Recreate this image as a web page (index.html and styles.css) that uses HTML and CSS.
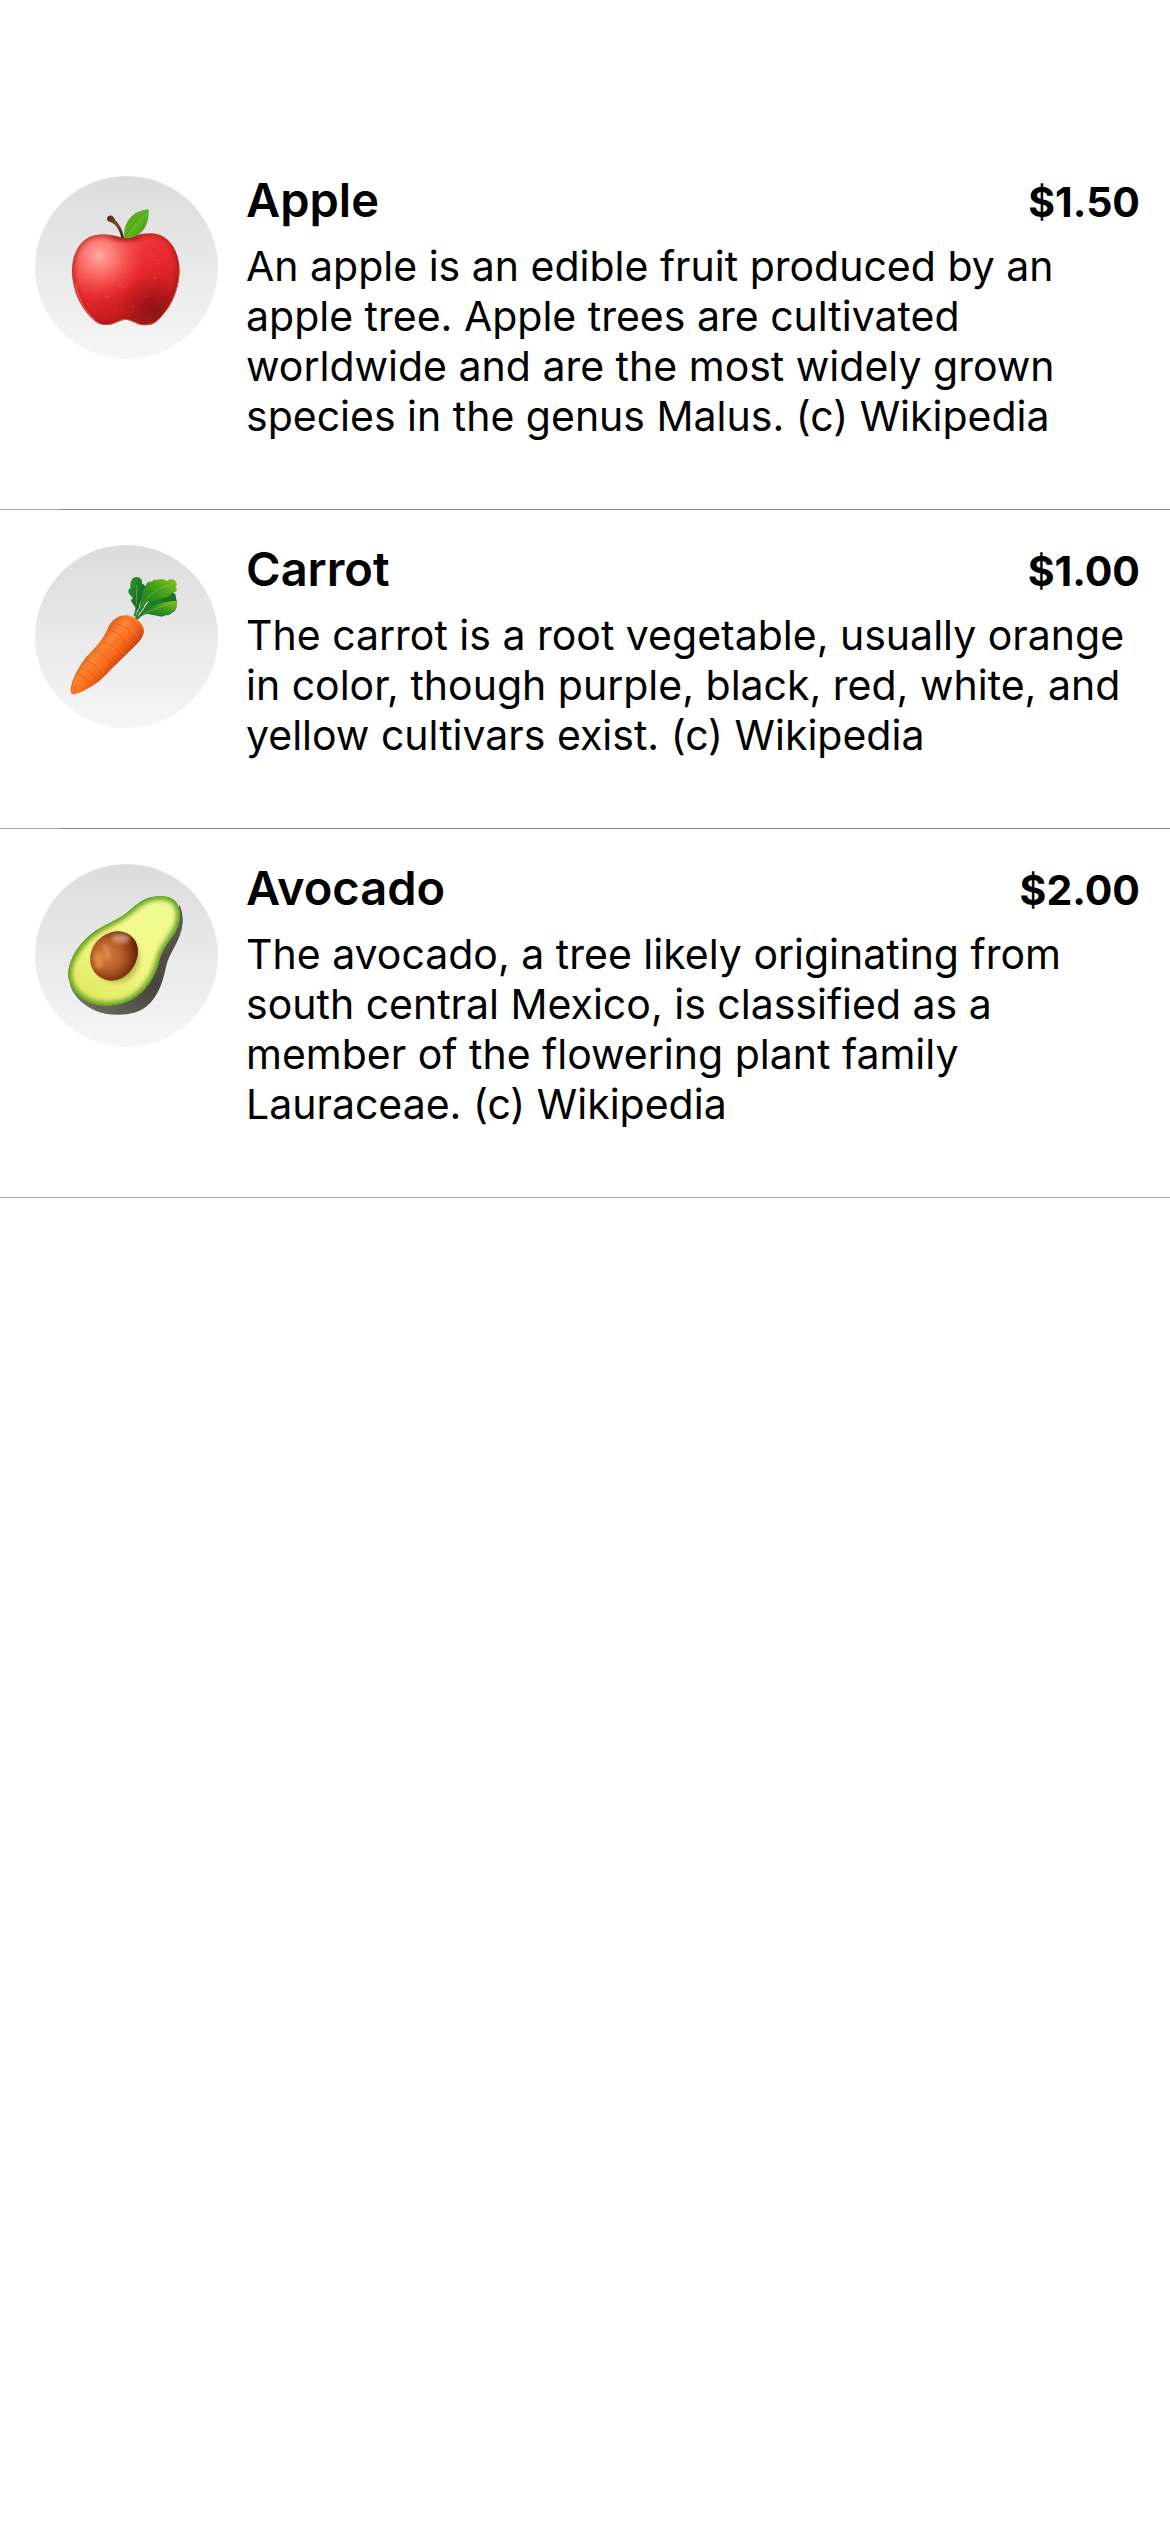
FILE: index.html
```html
<!DOCTYPE html>
<html lang="en">
<head>
<meta charset="utf-8">
<meta name="viewport" content="width=device-width, initial-scale=1">
<title>Products</title>
<link rel="stylesheet" href="styles.css">
</head>
<body>
<main class="screen">
  <ul class="product-list">
    <li class="product">
      <div class="avatar">
        <svg viewBox="45 47 549 549" role="img" aria-label="Apple">
          <defs>
            <linearGradient id="appleBase" x1="0.2" y1="0" x2="0.75" y2="1">
              <stop offset="0" stop-color="#f5484a"/><stop offset="0.5" stop-color="#e7282c"/><stop offset="0.8" stop-color="#c41c1f"/><stop offset="1" stop-color="#a8211f"/>
            </linearGradient>
            <radialGradient id="appleShine" gradientUnits="userSpaceOnUse" cx="238" cy="285" r="140">
              <stop offset="0" stop-color="#ffada3"/><stop offset="0.35" stop-color="#ff7f78" stop-opacity="0.85"/><stop offset="1" stop-color="#fb4a4b" stop-opacity="0"/>
            </radialGradient>
            <radialGradient id="appleShade" gradientUnits="userSpaceOnUse" cx="395" cy="445" r="100">
              <stop offset="0" stop-color="#6f0c10" stop-opacity="0.6"/><stop offset="1" stop-color="#8a0f12" stop-opacity="0"/>
            </radialGradient>
            <linearGradient id="appleLeaf" x1="0" y1="0" x2="1" y2="1">
              <stop offset="0" stop-color="#3f9a12"/><stop offset="0.5" stop-color="#62b822"/><stop offset="1" stop-color="#2f8a0c"/>
            </linearGradient>
            <linearGradient id="appleStem" x1="0" y1="0" x2="1" y2="1">
              <stop offset="0" stop-color="#4a2618"/><stop offset="0.5" stop-color="#7a4a34"/><stop offset="1" stop-color="#34150c"/>
            </linearGradient>
            <filter id="appleSoft" x="-20%" y="-20%" width="140%" height="140%"><feGaussianBlur stdDeviation="6"/></filter>
            <clipPath id="appleClip"><path d="M311 233C292 229 270 221 235 223C187 227 157 271 156 331C157 394 184 447 224 482C238 495 262 497 280 490C294 485 303 478 317 478C331 478 340 485 352 490C370 497 395 497 409 484C449 450 477 395 479 333C478 268 445 221 393 219C359 219 344 229 327 233Z"/></clipPath>
          </defs>
          <path d="M311 233C292 229 270 221 235 223C187 227 157 271 156 331C157 394 184 447 224 482C238 495 262 497 280 490C294 485 303 478 317 478C331 478 340 485 352 490C370 497 395 497 409 484C449 450 477 395 479 333C478 268 445 221 393 219C359 219 344 229 327 233Z" fill="url(#appleBase)"/>
          <g clip-path="url(#appleClip)">
            <rect x="150" y="210" width="340" height="300" fill="url(#appleShine)"/>
            <rect x="150" y="210" width="340" height="300" fill="url(#appleShade)"/>
            <ellipse cx="317" cy="232" rx="48" ry="10" fill="#a51418" opacity="0.6" filter="url(#appleSoft)"/>
            <path d="M311 233C292 229 270 221 235 223C187 227 157 271 156 331C157 394 184 447 224 482C238 495 262 497 280 490C294 485 303 478 317 478C331 478 340 485 352 490C370 497 395 497 409 484C449 450 477 395 479 333C478 268 445 221 393 219C359 219 344 229 327 233Z" fill="none" stroke="#8f1a18" stroke-width="14" opacity="0.6" filter="url(#appleSoft)"/>
            <path d="M165 370C175 417 198 457 226 482C240 495 262 496 280 490C294 485 303 478 317 478C331 478 340 485 352 490C370 497 395 497 409 484C449 450 477 395 479 333" fill="none" stroke="#f0694f" stroke-width="5" opacity="0.7"/>
            <g fill="#ff8d84" opacity="0.35"><circle cx="315" cy="335" r="3"/><circle cx="276" cy="355" r="3"/><circle cx="300" cy="374" r="3"/><circle cx="311" cy="380" r="2"/><circle cx="228" cy="386" r="2"/><circle cx="262" cy="408" r="3"/><circle cx="290" cy="268" r="3"/><circle cx="392" cy="280" r="2"/><circle cx="403" cy="298" r="2"/><circle cx="416" cy="310" r="2"/><circle cx="404" cy="352" r="3"/><circle cx="396" cy="370" r="2"/><circle cx="374" cy="249" r="2"/><circle cx="418" cy="264" r="2"/><circle cx="208" cy="335" r="2"/><circle cx="200" cy="350" r="2"/><circle cx="286" cy="438" r="2"/><circle cx="340" cy="440" r="2"/><circle cx="379" cy="408" r="2"/></g>
          </g>
          <path d="M304 233C300 212 288 191 271 185C260 184 259 172 265 167C274 162 283 169 286 180C299 192 309 211 312 234Z" fill="url(#appleStem)"/>
          <path d="M312 233C309 190 334 151 386 147C388 187 372 230 320 234Z" fill="url(#appleLeaf)"/>
          <path d="M316 230C328 203 350 175 383 150" fill="none" stroke="#2f860d" stroke-width="3" opacity="0.7"/>
        </svg>
      </div>
      <div class="details">
        <div class="heading"><h2 class="name">Apple</h2><span class="price">$1.50</span></div>
        <p class="description">An apple is an edible fruit produced by an apple tree. Apple trees are cultivated worldwide and are the most widely grown species in the genus Malus. (c) Wikipedia</p>
      </div>
    </li>
    <li class="product">
      <div class="avatar">
        <svg viewBox="45 44 549 549" role="img" aria-label="Carrot">
          <defs>
            <linearGradient id="carrotBody" gradientUnits="userSpaceOnUse" x1="220" y1="340" x2="295" y2="405">
              <stop offset="0" stop-color="#e2601c"/><stop offset="0.3" stop-color="#fb8433"/><stop offset="0.65" stop-color="#fb6b1b"/><stop offset="1" stop-color="#c94410"/>
            </linearGradient>
            <linearGradient id="leafBright" x1="0" y1="1" x2="1" y2="0">
              <stop offset="0" stop-color="#14702a"/><stop offset="0.5" stop-color="#36961c"/><stop offset="1" stop-color="#84c616"/>
            </linearGradient>
            <linearGradient id="leafDark" x1="0" y1="0" x2="1" y2="1">
              <stop offset="0" stop-color="#2b9a2c"/><stop offset="1" stop-color="#0d5423"/>
            </linearGradient>
            <clipPath id="carrotClip"><path d="M152 476C157 446 174 411 203 376C226 350 243 335 260 301C271 273 290 254 322 255C342 257 366 275 371 296C375 315 360 333 341 351L272 418C253 439 238 453 220 465C199 478 180 489 162 492C154 492 150 485 152 476Z"/></clipPath>
          </defs>
          <path d="M347 268C357 236 374 211 398 193M352 267C368 240 388 221 424 208M343 258C352 240 351 218 352 190" fill="none" stroke="#2f7b36" stroke-width="6"/>
          <path d="M350 240C350 230 337 223 332 208C340 207 340 204 331 195C323 186 323 177 332 172C329 157 335 140 349 140C360 139 368 149 366 160C375 162 379 171 375 183C371 198 360 207 355 238Z" fill="url(#leafDark)"/>
          <path d="M364 249C376 228 387 205 407 198C427 184 451 180 466 191L470 212C469 221 472 231 464 242C453 248 449 257 436 254C425 264 410 254 399 254C387 251 375 245 357 264Z" fill="url(#leafDark)"/>
          <path d="M358 235C362 215 363 193 371 180C377 164 381 150 395 154C403 145 413 150 423 147C430 142 434 153 442 151C455 142 469 149 471 162L466 171C477 179 467 188 455 188C445 203 428 201 416 207C400 215 382 205 374 225C370 235 363 245 355 251Z" fill="url(#leafBright)"/>
          <path d="M370 250C392 228 427 211 470 212C466 221 476 228 464 241C451 246 449 257 437 252C425 262 411 251 399 253C389 249 379 246 370 250Z" fill="url(#leafBright)"/>
          <path d="M360 235C373 205 402 178 449 162M370 251C397 239 426 225 461 218M349 224L350 165" fill="none" stroke="#a1cb46" stroke-width="2" opacity="0.7"/>
          <path d="M152 476C157 446 174 411 203 376C226 350 243 335 260 301C271 273 290 254 322 255C342 257 366 275 371 296C375 315 360 333 341 351L272 418C253 439 238 453 220 465C199 478 180 489 162 492C154 492 150 485 152 476Z" fill="url(#carrotBody)"/>
          <g clip-path="url(#carrotClip)" fill="none">
            <path d="M320 262C340 270 356 286 362 306M284 278C315 286 333 300 349 322M269 299C292 305 308 321 316 342M248 334C275 340 296 355 306 376M222 363C249 368 272 388 280 411M198 389C222 399 238 412 248 432M184 415C208 422 225 435 233 451M171 432C190 438 206 450 213 466" stroke="#c94611" stroke-width="3" opacity="0.45"/>
            <path d="M285 274C316 282 335 297 351 318M248 330C276 336 298 351 309 372M199 385C224 395 240 408 251 428" stroke="#ffb072" stroke-width="3" opacity="0.4"/>
            <path d="M152 476C157 446 174 411 203 376" stroke="#b94910" stroke-width="5" opacity="0.6"/>
          </g>
        </svg>
      </div>
      <div class="details">
        <div class="heading"><h2 class="name">Carrot</h2><span class="price">$1.00</span></div>
        <p class="description">The carrot is a root vegetable, usually orange in color, though purple, black, red, white, and yellow cultivars exist. (c) Wikipedia</p>
      </div>
    </li>
    <li class="product">
      <div class="avatar">
        <svg viewBox="45 41 549 549" role="img" aria-label="Avocado">
          <defs>
            <linearGradient id="avoSkin" x1="0.2" y1="1" x2="1" y2="0.2">
              <stop offset="0" stop-color="#6c6a63"/><stop offset="0.5" stop-color="#49453e"/><stop offset="1" stop-color="#5c574e"/>
            </linearGradient>
            <linearGradient id="avoFlesh" x1="0.8" y1="0" x2="0.2" y2="1">
              <stop offset="0" stop-color="#edfb92"/><stop offset="0.5" stop-color="#f5f789"/><stop offset="1" stop-color="#dfe860"/>
            </linearGradient>
            <radialGradient id="avoPit" gradientUnits="userSpaceOnUse" cx="262" cy="315" r="95">
              <stop offset="0" stop-color="#d5803a"/><stop offset="0.45" stop-color="#b7612a"/><stop offset="0.8" stop-color="#85350f"/><stop offset="1" stop-color="#571d08"/>
            </radialGradient>
            <filter id="avoSoft" x="-20%" y="-20%" width="140%" height="140%"><feGaussianBlur stdDeviation="7"/></filter>
            <clipPath id="avoClip"><path d="M144 370C148 320 181 273 229 240C262 219 291 210 320 187C347 166 372 137 420 138C456 137 479 153 480 193C480 218 471 240 454 263C436 289 424 306 416 337C405 381 380 415 350 438C325 457 290 467 250 466C194 460 148 430 144 370Z"/></clipPath>
            <clipPath id="pitClip"><path d="M211 318C216 275 254 243 297 243C334 246 356 274 354 307C350 352 316 392 270 391C231 387 207 354 211 318Z"/></clipPath>
          </defs>
          <path d="M150 405C163 443 204 480 255 490C305 498 351 492 380 468C415 438 428 397 438 350C446 307 484 271 488 217C489 193 484 174 478 164L410 270L350 400Z" fill="url(#avoSkin)"/>
          <path d="M144 370C148 320 181 273 229 240C262 219 291 210 320 187C347 166 372 137 420 138C456 137 479 153 480 193C480 218 471 240 454 263C436 289 424 306 416 337C405 381 380 415 350 438C325 457 290 467 250 466C194 460 148 430 144 370Z" fill="url(#avoFlesh)"/>
          <g clip-path="url(#avoClip)" fill="none">
            <path d="M144 370C148 320 181 273 229 240C262 219 291 210 320 187C347 166 372 137 420 138C456 137 479 153 480 193C480 218 471 240 454 263C436 289 424 306 416 337C405 381 380 415 350 438C325 457 290 467 250 466C194 460 148 430 144 370Z" stroke="#6fa82a" stroke-width="24" filter="url(#avoSoft)"/>
            <path d="M144 370C148 320 181 273 229 240C262 219 291 210 320 187C347 166 372 137 420 138C456 137 479 153 480 193C480 218 471 240 454 263C436 289 424 306 416 337C405 381 380 415 350 438C325 457 290 467 250 466C194 460 148 430 144 370Z" stroke="#629b2a" stroke-width="4"/>
            <ellipse cx="288" cy="323" rx="71" ry="74" fill="#9aa032" opacity="0.6" filter="url(#avoSoft)"/>
          </g>
          <path d="M211 318C216 275 254 243 297 243C334 246 356 274 354 307C350 352 316 392 270 391C231 387 207 354 211 318Z" fill="url(#avoPit)"/>
          <g clip-path="url(#pitClip)">
            <ellipse cx="303" cy="264" rx="28" ry="14" fill="#f1c3aa" opacity="0.6" filter="url(#avoSoft)"/>
            <ellipse cx="236" cy="330" rx="14" ry="27" fill="#f0a04b" opacity="0.65" filter="url(#avoSoft)"/>
            <path d="M248 286C260 293 267 302 264 326" fill="none" stroke="#eca36f" stroke-width="12" opacity="0.6" filter="url(#avoSoft)"/>
          </g>
        </svg>
      </div>
      <div class="details">
        <div class="heading"><h2 class="name">Avocado</h2><span class="price">$2.00</span></div>
        <p class="description">The avocado, a tree likely originating from south central Mexico, is classified as a member of the flowering plant family Lauraceae. (c) Wikipedia</p>
      </div>
    </li>
  </ul>
</main>
</body>
</html>
```
FILE: styles.css
```css
* {
  box-sizing: border-box;
}

body {
  margin: 0;
  background: #fff;
  color: #000;
  font-family: Inter, "Liberation Sans", sans-serif;
}

.screen {
  padding-top: 141px;
}

.product-list {
  margin: 0;
  padding: 0;
  list-style: none;
}

.product {
  display: flex;
  align-items: flex-start;
  gap: 28px;
  padding: 30px 30px 69px 35px;
  background: linear-gradient(to right, #a9a9a9 60px, #888 60px) left bottom / 100% 1px no-repeat;
}

.product:last-child {
  background-image: linear-gradient(#a9a9a9, #a9a9a9);
}

.avatar {
  flex: none;
  width: 183px;
  height: 183px;
  margin-top: 5px;
  border-radius: 50%;
  background: linear-gradient(#dcdcdc, #f6f6f6);
}

.avatar svg {
  display: block;
  width: 100%;
  height: 100%;
}

.details {
  flex: 1;
  min-width: 0;
}

.heading {
  display: flex;
  justify-content: space-between;
  align-items: baseline;
  margin-bottom: 13px;
}

.name {
  margin: 0;
  font-size: 47px;
  font-weight: 600;
  line-height: 57px;
}

.price {
  font-size: 41px;
  font-weight: 700;
  line-height: 50px;
}

.description {
  margin: 0;
  font-size: 41px;
  line-height: 50px;
}
```
